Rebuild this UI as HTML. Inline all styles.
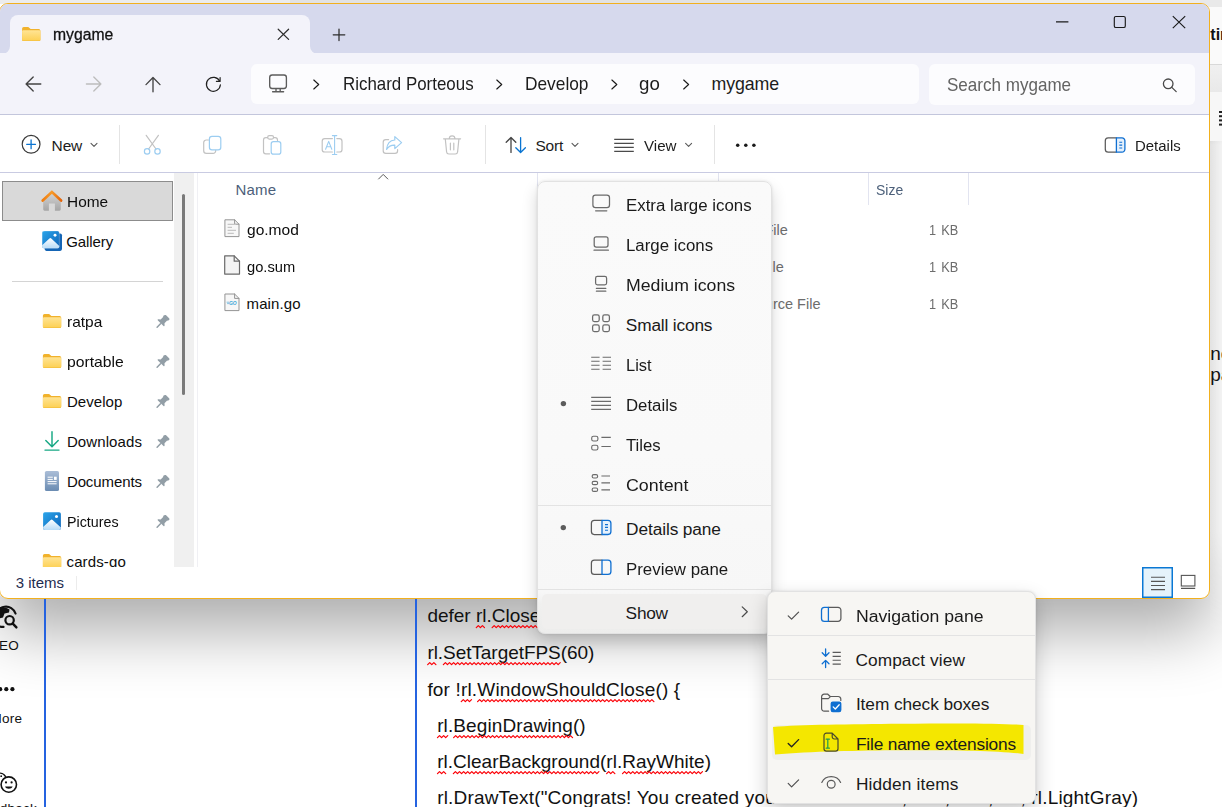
<!DOCTYPE html>
<html lang="en">
<head>
<meta charset="utf-8">
<title>mygame - File Explorer</title>
<style>
html,body{margin:0;padding:0;}
body{width:1222px;height:807px;overflow:hidden;position:relative;background:#fff;font-family:"Liberation Sans",sans-serif;}
.abs{position:absolute;}
.t{position:absolute;white-space:pre;line-height:1;transform-origin:0 0;font-family:"Liberation Sans",sans-serif;}
.layer{position:absolute;left:0;top:0;width:1222px;height:807px;}
svg{position:absolute;left:0;top:0;overflow:visible;}
/* ---------- background page ---------- */
#bg{background:#fff;}
.doc{position:absolute;white-space:pre;font-size:18.7px;line-height:1;color:#111;font-family:"Liberation Sans",sans-serif;}
.doc u{text-decoration:none;}
/* ---------- window ---------- */
#win{position:absolute;left:-1px;top:3px;width:1211px;height:596px;box-sizing:border-box;border:1px solid #f2b01e;border-radius:9px;overflow:hidden;background:#fff;}
#winin{position:absolute;left:0;top:-4px;width:1222px;height:807px;}
#titlebar{left:0;top:4px;width:1210px;height:50px;background:#d6d9ed;}
#addr{left:0;top:53px;width:1210px;height:61px;background:#f3f3fa;border-bottom:1px solid #c3c6dc;}
#tab{left:10px;top:14.5px;width:300px;height:40px;background:#f3f3fa;border-radius:8px 8px 0 0;}
.box{background:#fcfcfe;border-radius:6px;}
#cmd{left:0;top:115px;width:1210px;height:57px;background:#fff;border-bottom:1px solid #c9cbe2;}
.vsep{position:absolute;width:1px;background:#e4e4e4;}
#home{left:2px;top:181px;width:171px;height:40px;box-sizing:border-box;background:#d9d9d9;border:1px solid #8c8c8c;}
#strack{left:174px;top:173px;width:20px;height:394px;background:#f0f0f0;}
#sthumb{left:182px;top:194px;width:3px;height:201px;background:#7a7a7a;border-radius:2px;}
#sideclip{left:0;top:173px;width:174px;height:394px;overflow:hidden;}
#sideclip>div{position:absolute;left:0;top:-173px;width:1222px;height:807px;}
/* ---------- menus ---------- */
.menu{position:absolute;box-sizing:border-box;border:1px solid #e2e2e2;border-radius:8px;}
#menu{left:537px;top:181px;width:234.5px;height:452.5px;background:linear-gradient(to bottom,#fafafa 0,#f9f9f9 60%,#f7f7f7 91%,#f0f0ef 93.5%,#ededec 100%);box-shadow:0 8px 16px rgba(0,0,0,.16),0 0 3px rgba(0,0,0,.10);}
#sub{left:767px;top:591px;width:268.5px;height:212.5px;background:#f7f6f3;box-shadow:0 8px 20px rgba(0,0,0,.20),0 0 3px rgba(0,0,0,.10);}
.hsep{position:absolute;height:1px;background:#e3e3e3;}
</style>
</head>
<body>

<!-- ======================= BACKGROUND (browser / doc page) ======================= -->
<div id="bg" class="layer">
  <!-- right strip behind window -->
  <div class="abs" style="left:1200px;top:0;width:22px;height:7px;background:#e9e9e9"></div>
  <div class="abs" style="left:1200px;top:7px;width:22px;height:58px;background:#fafafa"></div>
  <div class="abs" style="left:1200px;top:64px;width:22px;height:1px;background:#d9d9d9"></div>
  <div class="abs" style="left:1200px;top:65px;width:22px;height:27px;background:linear-gradient(#f0f0f0,#e9e9e9)"></div>
  <div class="abs" style="left:1200px;top:92px;width:22px;height:49px;background:#f7f7f7"></div>
  <div class="abs" style="left:1200px;top:141px;width:22px;height:4px;background:linear-gradient(#f7f7f7,#fff)"></div>
  <div class="abs" style="left:0;top:0;width:1200px;height:4px;background:#ececec"></div>
  <div class="abs" style="left:290px;top:0;width:600px;height:4px;background:#e2e2e2"></div>
  <span class="t" style="left:1210.3px;top:26.5px;font-size:16px;font-weight:bold;color:#111">ting</span>
  <div class="abs" style="left:1219px;top:110.5px;width:6px;height:2.4px;background:#222;box-shadow:0 4.2px 0 #222,0 8.4px 0 #222,0 12.6px 0 #222"></div>
  <!-- shadow under window -->
  <div class="abs" style="left:0;top:141px;width:1222px;height:666px;overflow:hidden">
    <div class="abs" style="left:-1px;top:-138px;width:1211px;height:596px;border-radius:9px;box-shadow:0 32px 64px rgba(0,0,0,.33)"></div>
  </div>
  <div class="abs" style="left:1210px;top:141px;width:12px;height:500px;background:linear-gradient(to right,rgba(255,255,255,.30),rgba(255,255,255,.58));-webkit-mask-image:linear-gradient(to bottom,#000 0,#000 78%,transparent 100%);mask-image:linear-gradient(to bottom,#000 0,#000 78%,transparent 100%)"></div>
  <span class="t" style="left:1210.2px;top:344px;font-size:19px;color:#111">not</span>
  <span class="t" style="left:1210.2px;top:365px;font-size:19px;color:#111">pa</span>
  <!-- blue guide lines -->
  <div class="abs" style="left:44.2px;top:597px;width:2.2px;height:211px;background:#2563e0"></div>
  <div class="abs" style="left:415.4px;top:597px;width:2px;height:211px;background:#2563e0"></div>
  <!-- doc text -->
<div class="doc" style="left:427.40px;top:606.00px;font-size:19px;letter-spacing:0.000px">defer <u>rl</u>.<u>Close</u></div>
<div class="doc" style="left:427.40px;top:643.00px;font-size:19px;letter-spacing:-0.056px"><u>rl</u>.<u>SetTargetFPS</u>(60)</div>
<div class="doc" style="left:427.40px;top:680.00px;font-size:19px;letter-spacing:0.166px">for !<u>rl</u>.<u>WindowShouldClose</u>() {</div>
<div class="doc" style="left:437.20px;top:716.00px;font-size:19px;letter-spacing:0.107px"><u>rl</u>.<u>BeginDrawing</u>()</div>
<div class="doc" style="left:437.20px;top:752.00px;font-size:19px;letter-spacing:0.008px"><u>rl</u>.<u>ClearBackground</u>(<u>rl</u>.<u>RayWhite</u>)</div>
<div class="doc" style="left:437.20px;top:788.00px;font-size:19px;letter-spacing:0.178px"><u>rl</u>.<u>DrawText</u>(&quot;Congrats! You created your first window!&quot;, 190, 200, 20, <u>rl</u>.LightGray)</div>
<svg width="1222" height="807" viewBox="0 0 1222 807"><path d="M476.28 627.60 L478.33 625.60 L480.38 627.60 L482.43 625.60 L484.48 627.60 M492.13 627.60 L494.18 625.60 L496.23 627.60 L498.28 625.60 L500.33 627.60 L502.38 625.60 L504.43 627.60 L506.48 625.60 L508.53 627.60 L510.58 625.60 L512.63 627.60 L514.68 625.60 L516.73 627.60 L518.78 625.60 L520.83 627.60 L522.88 625.60 L524.93 627.60 L526.98 625.60 L529.03 627.60 L531.08 625.60 L533.13 627.60 L535.18 625.60 L537.23 627.60 L539.28 625.60 M427.69 664.60 L429.74 662.60 L431.79 664.60 L433.84 662.60 L435.89 664.60 M443.36 664.60 L445.41 662.60 L447.46 664.60 L449.51 662.60 L451.56 664.60 L453.61 662.60 L455.66 664.60 L457.71 662.60 L459.76 664.60 L461.81 662.60 L463.86 664.60 L465.91 662.60 L467.96 664.60 L470.01 662.60 L472.06 664.60 L474.11 662.60 L476.16 664.60 L478.21 662.60 L480.26 664.60 L482.31 662.60 L484.36 664.60 L486.41 662.60 L488.46 664.60 L490.51 662.60 L492.56 664.60 L494.61 662.60 L496.66 664.60 L498.71 662.60 L500.76 664.60 L502.81 662.60 L504.86 664.60 L506.91 662.60 L508.96 664.60 L511.01 662.60 L513.06 664.60 L515.11 662.60 L517.16 664.60 L519.21 662.60 L521.26 664.60 L523.31 662.60 L525.36 664.60 L527.41 662.60 L529.46 664.60 L531.51 662.60 L533.56 664.60 L535.61 662.60 L537.66 664.60 L539.71 662.60 L541.76 664.60 L543.81 662.60 L545.86 664.60 L547.91 662.60 L549.96 664.60 L552.01 662.60 L554.06 664.60 L556.11 662.60 L558.16 664.60 L560.21 662.60 M461.25 701.60 L463.30 699.60 L465.35 701.60 L467.40 699.60 L469.45 701.60 L471.50 699.60 M477.60 701.60 L479.65 699.60 L481.70 701.60 L483.75 699.60 L485.80 701.60 L487.85 699.60 L489.90 701.60 L491.95 699.60 L494.00 701.60 L496.05 699.60 L498.10 701.60 L500.15 699.60 L502.20 701.60 L504.25 699.60 L506.30 701.60 L508.35 699.60 L510.40 701.60 L512.45 699.60 L514.50 701.60 L516.55 699.60 L518.60 701.60 L520.65 699.60 L522.70 701.60 L524.75 699.60 L526.80 701.60 L528.85 699.60 L530.90 701.60 L532.95 699.60 L535.00 701.60 L537.05 699.60 L539.10 701.60 L541.15 699.60 L543.20 701.60 L545.25 699.60 L547.30 701.60 L549.35 699.60 L551.40 701.60 L553.45 699.60 L555.50 701.60 L557.55 699.60 L559.60 701.60 L561.65 699.60 L563.70 701.60 L565.75 699.60 L567.80 701.60 L569.85 699.60 L571.90 701.60 L573.95 699.60 L576.00 701.60 L578.05 699.60 L580.10 701.60 L582.15 699.60 L584.20 701.60 L586.25 699.60 L588.30 701.60 L590.35 699.60 L592.40 701.60 L594.45 699.60 L596.50 701.60 L598.55 699.60 L600.60 701.60 L602.65 699.60 L604.70 701.60 L606.75 699.60 L608.80 701.60 L610.85 699.60 L612.90 701.60 L614.95 699.60 L617.00 701.60 L619.05 699.60 L621.10 701.60 L623.15 699.60 L625.20 701.60 L627.25 699.60 L629.30 701.60 L631.35 699.60 L633.40 701.60 L635.45 699.60 L637.50 701.60 L639.55 699.60 L641.60 701.60 L643.65 699.60 L645.70 701.60 L647.75 699.60 L649.80 701.60 L651.85 699.60 L653.90 701.60 M437.49 737.60 L439.54 735.60 L441.59 737.60 L443.64 735.60 L445.69 737.60 L447.74 735.60 M453.64 737.60 L455.69 735.60 L457.74 737.60 L459.79 735.60 L461.84 737.60 L463.89 735.60 L465.94 737.60 L467.99 735.60 L470.04 737.60 L472.09 735.60 L474.14 737.60 L476.19 735.60 L478.24 737.60 L480.29 735.60 L482.34 737.60 L484.39 735.60 L486.44 737.60 L488.49 735.60 L490.54 737.60 L492.59 735.60 L494.64 737.60 L496.69 735.60 L498.74 737.60 L500.79 735.60 L502.84 737.60 L504.89 735.60 L506.94 737.60 L508.99 735.60 L511.04 737.60 L513.09 735.60 L515.14 737.60 L517.19 735.60 L519.24 737.60 L521.29 735.60 L523.34 737.60 L525.39 735.60 L527.44 737.60 L529.49 735.60 L531.54 737.60 L533.59 735.60 L535.64 737.60 L537.69 735.60 L539.74 737.60 L541.79 735.60 L543.84 737.60 L545.89 735.60 L547.94 737.60 L549.99 735.60 L552.04 737.60 L554.09 735.60 L556.14 737.60 L558.19 735.60 L560.24 737.60 L562.29 735.60 L564.34 737.60 L566.39 735.60 L568.44 737.60 L570.49 735.60 L572.54 737.60 M437.49 773.60 L439.54 771.60 L441.59 773.60 L443.64 771.60 L445.69 773.60 M453.36 773.60 L455.41 771.60 L457.46 773.60 L459.51 771.60 L461.56 773.60 L463.61 771.60 L465.66 773.60 L467.71 771.60 L469.76 773.60 L471.81 771.60 L473.86 773.60 L475.91 771.60 L477.96 773.60 L480.01 771.60 L482.06 773.60 L484.11 771.60 L486.16 773.60 L488.21 771.60 L490.26 773.60 L492.31 771.60 L494.36 773.60 L496.41 771.60 L498.46 773.60 L500.51 771.60 L502.56 773.60 L504.61 771.60 L506.66 773.60 L508.71 771.60 L510.76 773.60 L512.81 771.60 L514.86 773.60 L516.91 771.60 L518.96 773.60 L521.01 771.60 L523.06 773.60 L525.11 771.60 L527.16 773.60 L529.21 771.60 L531.26 773.60 L533.31 771.60 L535.36 773.60 L537.41 771.60 L539.46 773.60 L541.51 771.60 L543.56 773.60 L545.61 771.60 L547.66 773.60 L549.71 771.60 L551.76 773.60 L553.81 771.60 L555.86 773.60 L557.91 771.60 L559.96 773.60 L562.01 771.60 L564.06 773.60 L566.11 771.60 L568.16 773.60 L570.21 771.60 L572.26 773.60 L574.31 771.60 L576.36 773.60 L578.41 771.60 L580.46 773.60 L582.51 771.60 L584.56 773.60 L586.61 771.60 L588.66 773.60 L590.71 771.60 L592.76 773.60 L594.81 771.60 L596.86 773.60 L598.91 771.60 M606.64 773.60 L608.69 771.60 L610.74 773.60 L612.79 771.60 L614.84 773.60 M622.52 773.60 L624.57 771.60 L626.62 773.60 L628.67 771.60 L630.72 773.60 L632.77 771.60 L634.82 773.60 L636.87 771.60 L638.92 773.60 L640.97 771.60 L643.02 773.60 L645.07 771.60 L647.12 773.60 L649.17 771.60 L651.22 773.60 L653.27 771.60 L655.32 773.60 L657.37 771.60 L659.42 773.60 L661.47 771.60 L663.52 773.60 L665.57 771.60 L667.62 773.60 L669.67 771.60 L671.72 773.60 L673.77 771.60 L675.82 773.60 L677.87 771.60 L679.92 773.60 L681.97 771.60 L684.02 773.60 L686.07 771.60 L688.12 773.60 L690.17 771.60 L692.22 773.60 L694.27 771.60 L696.32 773.60 L698.37 771.60 L700.42 773.60 L702.47 771.60 M437.49 809.60 L439.54 807.60 L441.59 809.60 L443.64 807.60 L445.69 809.60 L447.74 807.60 M453.86 809.60 L455.91 807.60 L457.96 809.60 L460.01 807.60 L462.06 809.60 L464.11 807.60 L466.16 809.60 L468.21 807.60 L470.26 809.60 L472.31 807.60 L474.36 809.60 L476.41 807.60 L478.46 809.60 L480.51 807.60 L482.56 809.60 L484.61 807.60 L486.66 809.60 L488.71 807.60 L490.76 809.60 L492.81 807.60 L494.86 809.60 L496.91 807.60 L498.96 809.60 L501.01 807.60 L503.06 809.60 L505.11 807.60 L507.16 809.60 L509.21 807.60 L511.26 809.60 L513.31 807.60 L515.36 809.60 L517.41 807.60 L519.46 809.60 L521.51 807.60 L523.56 809.60 L525.61 807.60 L527.66 809.60 L529.71 807.60 L531.76 809.60 L533.81 807.60 M1031.63 809.60 L1033.68 807.60 L1035.73 809.60 L1037.78 807.60 L1039.83 809.60 L1041.88 807.60" fill="none" stroke="#fb0007" stroke-width="1.25" stroke-linejoin="round" stroke-linecap="round"/></svg>
  <svg width="1222" height="807" viewBox="0 0 1222 807" fill="none" stroke-linecap="round" stroke-linejoin="round">
    <!-- globe + magnifier (SEO) -->
    <path d="M-4 616.5 A10 10 0 0 1 15.5 613.5" stroke="#111" stroke-width="2.2"/>
    <path d="M-3 608 C1 606.5 6 607 9.5 609.5 L9 612.5 L4.5 613.5 L3 617.5 L-1 618.5 L-3.5 622 Z" fill="#111" stroke="none"/>
    <path d="M-3 625.5 C-1 626.5 1.5 627 3.5 626.8" stroke="#111" stroke-width="2.2"/>
    <circle cx="9.6" cy="620.2" r="4.2" stroke="#111" stroke-width="2.2"/>
    <path d="M12.8 623.6 L16.4 627.4" stroke="#111" stroke-width="2.4"/>
    <!-- more dots -->
    <g fill="#111" stroke="none"><circle cx="0.2" cy="689.2" r="2.1"/><circle cx="6.3" cy="689.2" r="2.1"/><circle cx="12.4" cy="689.2" r="2.1"/></g>
    <!-- smiley -->
    <circle cx="8.8" cy="784.6" r="7.7" stroke="#111" stroke-width="1.6"/>
    <circle cx="6" cy="782.4" r="1.1" fill="#111" stroke="none"/><circle cx="11.6" cy="782.4" r="1.1" fill="#111" stroke="none"/>
    <path d="M5 786.6 C6 789.6 11.6 789.6 12.6 786.6 Z" fill="#111" stroke="none"/>
    <path d="M-2 773.6 A6 6 0 0 1 5.4 776.4" stroke="#111" stroke-width="1.4"/>
    <circle cx="1.2" cy="776.2" r=".9" fill="#111" stroke="none"/>
  </svg>
  <span class="t" style="left:-10.2px;top:639px;font-size:13.5px;color:#111;letter-spacing:.2px">SEO</span>
  <span class="t" style="left:-9.4px;top:712px;font-size:13.5px;color:#111;letter-spacing:.2px">More</span>
  <span class="t" style="left:-24px;top:802px;font-size:13.5px;color:#111;letter-spacing:.2px">Feedback</span>

</div>

<!-- ======================= EXPLORER WINDOW ======================= -->
<div id="win"><div id="winin">
  <div id="titlebar" class="abs"></div>
  <div id="addr" class="abs"></div>
  <div id="tab" class="abs"></div>
  <!-- tab concave corners -->
  <svg width="1222" height="807">
    <path d="M2 54 A8 8 0 0 0 10 46 V54 Z" fill="#f3f3fa"/>
    <path d="M318 54 A8 8 0 0 1 310 46 V54 Z" fill="#f3f3fa"/>
  </svg>
  <div class="abs box" style="left:251px;top:64px;width:668px;height:40px"></div>
  <div class="abs box" style="left:929px;top:64px;width:266px;height:41px"></div>
  <div id="cmd" class="abs"></div>
  <div class="vsep" style="left:119px;top:125px;height:39px"></div>
  <div class="vsep" style="left:485px;top:125px;height:39px"></div>
  <div class="vsep" style="left:714px;top:125px;height:39px"></div>
  <!-- sidebar -->
  <div id="home" class="abs"></div>
  <div id="strack" class="abs"></div>
  <div id="sthumb" class="abs"></div>
  <div class="abs" style="left:12px;top:281px;width:151px;height:1px;background:#d4d4d4"></div>
  <div class="abs" style="left:196.5px;top:173px;width:1px;height:394px;background:#f0f0f4"></div>
  <!-- list header separators -->
  <div class="abs" style="left:868px;top:173px;width:1px;height:32px;background:#e2e4f0"></div>
  <div class="abs" style="left:968px;top:173px;width:1px;height:32px;background:#e2e4f0"></div>
  <div class="abs" style="left:537px;top:173px;width:1px;height:32px;background:#e2e4f0"></div>
  <div class="abs" style="left:718px;top:173px;width:1px;height:32px;background:#e2e4f0"></div>
  <!-- status bar -->
  <div class="abs" style="left:76px;top:575.5px;width:1px;height:14px;background:#ececec"></div>
  <div class="abs" style="left:1142px;top:567px;width:31px;height:31px;box-sizing:border-box;border:1px solid #0a78d4;box-shadow:inset 0 0 0 .5px #0a78d4;background:#e5f3fb"></div>
<svg width="1222" height="807" viewBox="0 0 1222 807" fill="none" stroke-linecap="round" stroke-linejoin="round">
  <defs>
    <linearGradient id="gFold" x1="0" y1="0" x2="0" y2="1"><stop offset="0" stop-color="#ffe494"/><stop offset=".9" stop-color="#fdd25a"/><stop offset="1" stop-color="#f2bb36"/></linearGradient>
    <linearGradient id="gBlue" x1="0" y1="0" x2="1" y2="1"><stop offset="0" stop-color="#2ba5ea"/><stop offset="1" stop-color="#0e63b8"/></linearGradient>
    <linearGradient id="gMount" x1="0" y1="0" x2="0" y2="1"><stop offset="0" stop-color="#ffffff"/><stop offset="1" stop-color="#b9dcf7"/></linearGradient>
    <linearGradient id="gDoc" x1="0" y1="0" x2="0" y2="1"><stop offset="0" stop-color="#aabdd7"/><stop offset="1" stop-color="#6a8bb2"/></linearGradient>
    <linearGradient id="gHome" x1="0" y1="0" x2="0" y2="1"><stop offset="0" stop-color="#d6d6d6"/><stop offset="1" stop-color="#a6a6a6"/></linearGradient>
    <linearGradient id="gRoof" x1="0" y1="0" x2="1" y2="0"><stop offset="0" stop-color="#ef7d10"/><stop offset=".5" stop-color="#f79a2a"/><stop offset="1" stop-color="#e4650a"/></linearGradient>
    <g id="folder">
      <path d="M0 1.6 a1.6 1.6 0 0 1 1.6 -1.6 h4.6 l2.3 2.1 h8.2 a1.6 1.6 0 0 1 1.6 1.6 v9 a1.3 1.3 0 0 1 -1.3 1.3 h-15.7 a1.3 1.3 0 0 1 -1.3 -1.3 z" fill="#f1b22c" stroke="none"/>
      <rect x="0" y="3.3" width="18.3" height="10.7" rx="1.3" fill="url(#gFold)" stroke="none"/>
    </g>
    <g id="pin" fill="#929ea6" stroke="none">
      <path d="M8.2 0.5 c.5 -.5 1.2 -.5 1.7 0 l3 3 c.5 .5 .5 1.2 0 1.7 l-.9 .6 l-1.3 .2 l-2.4 2.4 l.1 2.3 c0 .7 -.6 1 -1.1 .5 l-5.6 -5.6 c-.5 -.5 -.2 -1.1 .5 -1.1 l2.3 .1 l2.4 -2.4 l.2 -1.3 z"/>
      <path d="M4.3 9 L0.9 12.4" stroke="#929ea6" stroke-width="1.5" stroke-linecap="round" fill="none"/>
    </g>
    <g id="pic">
      <rect x="0" y="0" width="17.8" height="17.8" rx="1.8" fill="url(#gBlue)" stroke="none"/>
      <path d="M0 16 v-1.2 l7.6 -7 a1.4 1.4 0 0 1 1.9 0 l8.3 7.6 v.6 a1.8 1.8 0 0 1 -1.8 1.8 h-14.2 a1.8 1.8 0 0 1 -1.8 -1.8z" fill="url(#gMount)" stroke="none"/>
      <circle cx="13.4" cy="4.4" r="1.5" fill="#fff" stroke="none"/>
    </g>
    <path id="chev" d="M0 0 l4.9 4.5 l-4.9 4.5" stroke="#1a1a1a" stroke-width="1.15"/>
    <path id="chevd" d="M0 0 l3 3 l3 -3" stroke="#5a5a5a" stroke-width="1.1"/>
  </defs>

  <!-- window controls -->
  <g stroke="#1a1a1a" stroke-width="1.15" stroke-linecap="butt">
    <path d="M1056 21.8 H1068.4"/>
    <rect x="1114.3" y="16.5" width="11" height="11" rx="1.6"/>
    <path d="M1172.8 16.1 L1185.2 28.1 M1185.2 16.1 L1172.8 28.1"/>
  </g>
  <!-- tab -->
  <use href="#folder" x="22.1" y="27"/>
  <g stroke="#2e2e2e" stroke-width="1.25">
    <path d="M278.2 29.2 L288.6 39.4 M288.6 29.2 L278.2 39.4"/>
    <path d="M333.2 34.8 H344.8 M339 29 V40.6"/>
  </g>
  <!-- nav arrows -->
  <g stroke="#444" stroke-width="1.35">
    <path d="M26.2 84 H40.8 M33.2 76.9 L26.1 84 L33.2 91.1"/>
    <path d="M153 77.6 V91.7 M146 84.6 L153 77.5 L160 84.6"/>
    <path d="M219.7 81.2 A7 7 0 1 0 220.4 84.8" stroke-width="1.2" stroke="#222"/>
    <path d="M220.1 77.5 V81.3 H216.4" stroke-width="1.2" stroke="#222"/>
  </g>
  <g stroke="#bdbdbd" stroke-width="1.35">
    <path d="M86.4 84 H100.9 M93.8 76.9 L100.9 84 L93.8 91.1"/>
  </g>
  <!-- monitor -->
  <g stroke="#5c5c5c" stroke-width="1.35">
    <rect x="269.7" y="75" width="16.7" height="13.5" rx="2.4"/>
    <path d="M276 88.8 V91.4 M280.2 88.8 V91.4 M272.6 91.7 H283.6"/>
  </g>
  <use href="#chev" x="313.8" y="80"/>
  <use href="#chev" x="496.8" y="80"/>
  <use href="#chev" x="611.9" y="80"/>
  <use href="#chev" x="683.7" y="80"/>
  <!-- search -->
  <g stroke="#4a4a4a" stroke-width="1.3">
    <circle cx="1168.2" cy="83.8" r="4.8"/>
    <path d="M1171.8 87.4 L1176.2 91.6"/>
  </g>
  <!-- command bar -->
  <circle cx="31.1" cy="144.3" r="8.9" stroke="#3a3a3a" stroke-width="1.2"/>
  <path d="M26.7 144.3 H35.5 M31.1 139.9 V148.7" stroke="#0a74d1" stroke-width="1.3"/>
  <use href="#chevd" x="91" y="143.4"/>
  <use href="#chevd" x="572" y="143.4"/>
  <use href="#chevd" x="685.6" y="143.4"/>
  <!-- scissors -->
  <g stroke="#c2c2c2" stroke-width="1.2">
    <path d="M146.2 135.3 L156 149 M158.4 135.3 L148.6 149"/>
  </g>
  <g stroke="#9ccdf1" stroke-width="1.2">
    <circle cx="147.1" cy="151.4" r="2.7"/><circle cx="157.5" cy="151.4" r="2.7"/>
  </g>
  <!-- copy -->
  <path d="M208.4 140 H206.3 a2.6 2.6 0 0 0 -2.6 2.6 v8.2 a2.6 2.6 0 0 0 2.6 2.6 h6.8 a2.6 2.6 0 0 0 2.6 -2.6 V150.4" stroke="#c2c2c2" stroke-width="1.2"/>
  <rect x="209.4" y="136.3" width="11.4" height="13.6" rx="2.6" stroke="#9ccdf1" stroke-width="1.2"/>
  <!-- paste -->
  <path d="M267.6 137.6 H265.8 a2.3 2.3 0 0 0 -2.3 2.3 v11.6 a2.3 2.3 0 0 0 2.3 2.3 h3.8 M273.6 137.6 h1.6 a2.3 2.3 0 0 1 2.3 2.3 v.8" stroke="#c2c2c2" stroke-width="1.2"/>
  <rect x="267.7" y="135.7" width="5.8" height="3.4" rx="1.5" stroke="#c2c2c2" stroke-width="1.2"/>
  <rect x="271.2" y="141.7" width="9.6" height="12.4" rx="2.2" stroke="#9ccdf1" stroke-width="1.2"/>
  <!-- rename -->
  <path d="M332.4 138.6 H324.8 a2.6 2.6 0 0 0 -2.6 2.6 v8.2 a2.6 2.6 0 0 0 2.6 2.6 h7.6 M336.8 138.6 h2.6 a2.6 2.6 0 0 1 2.6 2.6 v8.2 a2.6 2.6 0 0 1 -2.6 2.6 h-2.6" stroke="#c2c2c2" stroke-width="1.2"/>
  <path d="M334.6 136 V154.2 M332.4 135.6 H336.8 M332.4 154.5 H336.8 M325.6 149.3 L328.7 141.4 L331.8 149.3 M326.6 146.8 H330.8" stroke="#9ccdf1" stroke-width="1.1"/>
  <!-- share -->
  <path d="M388.6 139.6 H385.8 a2.6 2.6 0 0 0 -2.6 2.6 v8.6 a2.6 2.6 0 0 0 2.6 2.6 h9.2 a2.6 2.6 0 0 0 2.6 -2.6 V149.6" stroke="#c2c2c2" stroke-width="1.2"/>
  <path d="M394.8 136.6 L401.6 142.6 L394.8 148.6 V145.2 C391 145 388.6 146.4 386.6 149.4 C387 144.4 389.8 140.4 394.8 140 Z" stroke="#9ccdf1" stroke-width="1.2"/>
  <!-- delete -->
  <path d="M443.6 138.8 H460.6 M449.3 138.6 a2.8 2.8 0 0 1 5.6 0 M445.3 139 l1.3 13 a2.3 2.3 0 0 0 2.3 2 h6.4 a2.3 2.3 0 0 0 2.3 -2 l1.3 -13 M450.4 143.2 V149.8 M453.8 143.2 V149.8" stroke="#c2c2c2" stroke-width="1.2"/>
  <!-- sort -->
  <path d="M511 137.6 V152.4 M506.2 142.3 L511 137.5 L515.8 142.3" stroke="#444" stroke-width="1.3"/>
  <path d="M520.6 137.6 V152.4 M515.8 147.7 L520.6 152.5 L525.4 147.7" stroke="#0a74d1" stroke-width="1.3"/>
  <!-- view -->
  <path d="M614.2 139.3 H633.8 M614.2 143.3 H633.8 M614.2 147.3 H633.8 M614.2 151.3 H633.8" stroke="#4a4a4a" stroke-width="1.2" stroke-linecap="butt"/>
  <!-- more -->
  <g fill="#1a1a1a" stroke="none"><circle cx="737.7" cy="145.2" r="1.75"/><circle cx="745.8" cy="145.2" r="1.75"/><circle cx="753.9" cy="145.2" r="1.75"/></g>
  <!-- details pane icon -->
  <path d="M1116.4 137.9 H1108.2 a2.9 2.9 0 0 0 -2.9 2.9 v8.5 a2.9 2.9 0 0 0 2.9 2.9 h8.2" stroke="#5a5a5a" stroke-width="1.25"/>
  <path d="M1116.4 137.9 h5.6 a2.9 2.9 0 0 1 2.9 2.9 v8.5 a2.9 2.9 0 0 1 -2.9 2.9 h-5.6 z" stroke="#0f6fd1" stroke-width="1.3" fill="#e6f1fc"/>
  <path d="M1119.3 142.2 H1122.2 M1119.3 145.1 H1122.2 M1119.3 148 H1122.2" stroke="#0f6fd1" stroke-width="1.1" stroke-linecap="butt"/>

  <!-- home -->
  <path d="M43.2 199.6 L51.9 192.2 L60.8 199.6 V209.3 a1.4 1.4 0 0 1 -1.4 1.4 H54.9 V203.4 H48.9 V210.7 H44.6 a1.4 1.4 0 0 1 -1.4 -1.4 Z" fill="url(#gHome)" stroke="none"/>
  <path d="M42.7 200.6 L51.9 192 L61.1 200.6" stroke="url(#gRoof)" stroke-width="2.7" stroke-linejoin="miter" stroke-linecap="round"/>
  <!-- gallery -->
  <rect x="44.6" y="233.5" width="17.4" height="17.4" rx="1.8" fill="#1565b5" stroke="none"/>
  <g transform="translate(42.1 231) scale(.966)"><use href="#pic"/></g>
  <rect x="42.1" y="231" width="17.2" height="17.2" rx="1.8" stroke="#fff" stroke-width=".5" stroke-opacity=".5"/>
  <!-- folders -->
  <use href="#folder" x="42.9" y="313.9"/>
  <use href="#folder" x="42.9" y="353.9"/>
  <use href="#folder" x="42.9" y="393.9"/>
  <!-- downloads -->
  <path d="M52 431.8 V446.6 M45.8 440.6 L52 446.8 L58.2 440.6 M45 450.1 H59" stroke="#17a884" stroke-width="1.45"/>
  <!-- documents -->
  <rect x="44.9" y="471" width="14.1" height="20" rx="1.6" fill="url(#gDoc)" stroke="none"/>
  <path d="M47.6 477.2 H52.8 M47.6 479.4 H52.8 M47.6 481.6 H56.6 M47.6 483.8 H56.6" stroke="#fff" stroke-width="1" stroke-linecap="butt"/>
  <rect x="54" y="476.7" width="2.7" height="3.2" fill="#fff" stroke="none"/>
  <!-- pictures -->
  <use href="#pic" x="43.1" y="512.2"/>
  <!-- pins -->
  <use href="#pin" x="156.2" y="314.8"/>
  <use href="#pin" x="156.2" y="354.8"/>
  <use href="#pin" x="156.2" y="394.8"/>
  <use href="#pin" x="156.2" y="434.8"/>
  <use href="#pin" x="156.2" y="474.8"/>
  <use href="#pin" x="156.2" y="514.8"/>

  <!-- list: sort caret -->
  <path d="M378.6 179 L383.2 174.4 L387.8 179" stroke="#5a5a5a" stroke-width="1"/>
  <!-- file icons -->
  <g stroke="#949494" stroke-width="1" fill="#f7f7f7">
    <path d="M225.3 219.8 H234.6 L239 224.2 V236.6 H225.3 Z"/>
    <path d="M234.6 219.8 V224.2 H239" fill="none"/>
    <path d="M225.3 294 H234.6 L239 298.4 V310.6 H225.3 Z"/>
    <path d="M234.6 294 V298.4 H239" fill="none"/>
  </g>
  <path d="M227.6 224.4 H236 M227.6 227.4 H232 M227.6 230.4 H236 M227.6 233.4 H233.8" stroke="#c6c6c6" stroke-width="1.1" stroke-linecap="butt"/>
  <g stroke="#6a6a6a" stroke-width="1.2" fill="#f4f4f4">
    <path d="M224.7 255.9 H234.2 L239.5 261.2 V274.1 H224.7 Z"/>
    <path d="M234.2 255.9 V261.2 H239.5" fill="none"/>
  </g>
  <text x="228.9" y="305.2" font-family="Liberation Sans, sans-serif" font-size="5.6" font-weight="bold" font-style="italic" fill="#35a3d6" stroke="none" textLength="7.6" lengthAdjust="spacingAndGlyphs">GO</text><path d="M227 302.2 H228.6 M227.5 303.6 H228.6" stroke="#35a3d6" stroke-width=".6"/>

  <!-- status bar view buttons -->
  <path d="M1151 577.3 H1165 M1151 581.4 H1165 M1151 585.5 H1165 M1151 589.6 H1165" stroke="#555" stroke-width="1.1" stroke-linecap="butt"/>
  <rect x="1181.3" y="575.4" width="13.6" height="10.6" stroke="#555" stroke-width="1.1" stroke-linejoin="miter"/>
  <path d="M1181 588.4 H1195.2" stroke="#555" stroke-width="1.1" stroke-linecap="butt"/>
</svg>

<span class="t" style="left:53.40px;top:27px;font-size:16.8px;color:#111;transform:scaleX(0.9369);-webkit-text-stroke:.3px #111;">mygame</span>
<span class="t" style="left:343.20px;top:76px;font-size:17.8px;color:#1c1c1c;transform:scaleX(0.9506);">Richard Porteous</span>
<span class="t" style="left:525.20px;top:76px;font-size:17.8px;color:#1c1c1c;transform:scaleX(0.9732);">Develop</span>
<span class="t" style="left:639.40px;top:76px;font-size:17.8px;color:#1c1c1c;transform:scaleX(1.0515);">go</span>
<span class="t" style="left:711.60px;top:76px;font-size:17.8px;color:#1c1c1c;letter-spacing:-0.138px;">mygame</span>
<span class="t" style="left:947.00px;top:77px;font-size:17.8px;color:#636363;transform:scaleX(0.9585);">Search mygame</span>
<span class="t" style="left:51.60px;top:138px;font-size:15.5px;color:#1c1c1c;letter-spacing:-0.158px;">New</span>
<span class="t" style="left:535.40px;top:138px;font-size:15.5px;color:#1c1c1c;letter-spacing:-0.179px;">Sort</span>
<span class="t" style="left:643.70px;top:138px;font-size:15.5px;color:#1c1c1c;transform:scaleX(0.9752);">View</span>
<span class="t" style="left:1135.00px;top:138px;font-size:15.5px;color:#1c1c1c;transform:scaleX(0.9643);">Details</span>
<span class="t" style="left:66.70px;top:194px;font-size:15px;color:#0d0d0d;transform:scaleX(1.0271);">Home</span>
<span class="t" style="left:66.20px;top:234px;font-size:15px;color:#0d0d0d;letter-spacing:-0.086px;">Gallery</span>
<span class="t" style="left:66.50px;top:314px;font-size:15px;color:#0d0d0d;transform:scaleX(1.0321);">ratpa</span>
<span class="t" style="left:66.90px;top:354px;font-size:15px;color:#0d0d0d;transform:scaleX(1.0476);">portable</span>
<span class="t" style="left:66.90px;top:394px;font-size:15px;color:#0d0d0d;letter-spacing:0.076px;">Develop</span>
<span class="t" style="left:66.90px;top:434px;font-size:15px;color:#0d0d0d;letter-spacing:0.110px;">Downloads</span>
<span class="t" style="left:66.90px;top:474px;font-size:15px;color:#0d0d0d;letter-spacing:-0.097px;">Documents</span>
<span class="t" style="left:66.50px;top:514px;font-size:15px;color:#0d0d0d;transform:scaleX(0.9522);">Pictures</span>
<span class="t" style="left:15.80px;top:575px;font-size:15px;color:#1f2d4f;letter-spacing:-0.010px;">3 items</span>
<span class="t" style="left:235.60px;top:182px;font-size:15px;color:#4c607a;letter-spacing:0.161px;">Name</span>
<span class="t" style="left:875.50px;top:182px;font-size:15px;color:#4c607a;transform:scaleX(0.9319);">Size</span>
<span class="t" style="left:246.50px;top:222px;font-size:15px;color:#0d0d0d;transform:scaleX(1.0370);">go.mod</span>
<span class="t" style="left:246.50px;top:259px;font-size:15px;color:#0d0d0d;transform:scaleX(0.9796);">go.sum</span>
<span class="t" style="left:246.50px;top:296px;font-size:15px;color:#0d0d0d;letter-spacing:0.137px;">main.go</span>
<span class="t" style="left:929.30px;top:222px;font-size:15px;color:#6d6d6d;transform:scaleX(0.8485);word-spacing:2px;">1 KB</span>
<span class="t" style="left:929.30px;top:259px;font-size:15px;color:#6d6d6d;transform:scaleX(0.8485);word-spacing:2px;">1 KB</span>
<span class="t" style="left:929.30px;top:296px;font-size:15px;color:#6d6d6d;transform:scaleX(0.8485);word-spacing:2px;">1 KB</span>
<span class="t" style="left:726.57px;top:223px;font-size:14.5px;color:#6d6d6d;">MOD File</span>
<span class="t" style="left:724.17px;top:260px;font-size:14.5px;color:#6d6d6d;">SUM File</span>
<span class="t" style="left:723.78px;top:297px;font-size:14.5px;color:#6d6d6d;">Go Source File</span>
  <div id="sideclip" class="abs"><div>
<span class="t" style="left:66.50px;top:554px;font-size:15px;color:#0d0d0d;letter-spacing:0.134px;">cards-go</span>
<svg width="1222" height="807" viewBox="0 0 1222 807"><use href="#folder" x="42.9" y="553.9"/></svg>

  </div></div>
</div></div>

<!-- ======================= VIEW MENU ======================= -->
<div id="menu" class="menu"></div>
<div class="layer" id="menul">
  <div class="hsep" style="left:538px;top:504.5px;width:232.5px"></div>
  <div class="hsep" style="left:538px;top:588.5px;width:232.5px"></div>
  <div class="abs" style="left:542px;top:594px;width:224.5px;height:35px;border-radius:5px;background:#f0efee"></div>
<svg width="1222" height="807" viewBox="0 0 1222 807" fill="none" stroke-linecap="round" stroke-linejoin="round">
  <g stroke="#6b6b6b" stroke-width="1.25">
    <!-- extra large -->
    <rect x="592.9" y="195.1" width="16.6" height="12.6" rx="2.6"/>
    <path d="M595.6 210.8 H606.8"/>
    <!-- large -->
    <rect x="594.2" y="236.8" width="13.8" height="10.2" rx="2"/>
    <path d="M594 250.2 H608.4"/>
    <!-- medium -->
    <rect x="595.6" y="276.4" width="11" height="8.4" rx="1.8"/>
    <path d="M596.4 288.4 H605.8 M596.4 291.2 H605.8"/>
    <!-- small -->
    <rect x="592.6" y="314.9" width="6.6" height="6.6" rx="1.8"/>
    <rect x="602.8" y="314.9" width="6.6" height="6.6" rx="1.8"/>
    <rect x="592.6" y="324.9" width="6.6" height="6.6" rx="1.8"/>
    <rect x="602.8" y="324.9" width="6.6" height="6.6" rx="1.8"/>
  </g>
  <g stroke="#6b6b6b" stroke-width="1.15" stroke-linecap="butt">
    <!-- list -->
    <path d="M591.2 357.2 H599.6 M602.6 357.2 H611 M591.2 361.2 H599.6 M602.6 361.2 H611 M591.2 365.2 H599.6 M602.6 365.2 H611 M591.2 369.2 H599.6 M602.6 369.2 H611"/>
    <!-- details -->
    <path d="M591.2 397.3 H611 M591.2 401.3 H611 M591.2 405.3 H611 M591.2 409.3 H611"/>
    <!-- tiles lines -->
    <path d="M601.4 437.3 H610.8 M601.4 446.5 H610.8"/>
    <!-- content lines -->
    <path d="M601.4 476 H610 M601.4 482.9 H610 M601.4 489.8 H610"/>
  </g>
  <g stroke="#6b6b6b" stroke-width="1.15">
    <rect x="591.7" y="436.2" width="6.2" height="4.8" rx="1.8"/>
    <rect x="591.7" y="445.2" width="6.2" height="4.8" rx="1.8"/>
    <rect x="592.2" y="474.6" width="5.4" height="3.4" rx="1.5"/>
    <rect x="592.2" y="481.3" width="5.4" height="3.4" rx="1.5"/>
    <rect x="592.2" y="488" width="5.4" height="3.4" rx="1.5"/>
  </g>
  <!-- bullets -->
  <circle cx="563.4" cy="403.6" r="2.7" fill="#5c5c5c"/>
  <circle cx="563.3" cy="527.6" r="2.7" fill="#5c5c5c"/>
  <!-- details pane -->
  <path d="M602 520.3 H594.3 a2.9 2.9 0 0 0 -2.9 2.9 v8.4 a2.9 2.9 0 0 0 2.9 2.9 h7.7" stroke="#5a5a5a" stroke-width="1.25"/>
  <path d="M602 520.3 h6 a2.9 2.9 0 0 1 2.9 2.9 v8.4 a2.9 2.9 0 0 1 -2.9 2.9 h-6 z" stroke="#0f6fd1" stroke-width="1.3" fill="#e6f1fc"/>
  <path d="M605 524.6 H608 M605 527.4 H608 M605 530.2 H608" stroke="#0f6fd1" stroke-width="1.1" stroke-linecap="butt"/>
  <!-- preview pane -->
  <path d="M602 560.2 H594.3 a2.9 2.9 0 0 0 -2.9 2.9 v8.4 a2.9 2.9 0 0 0 2.9 2.9 h7.7" stroke="#5a5a5a" stroke-width="1.25"/>
  <path d="M602 560.2 h6 a2.9 2.9 0 0 1 2.9 2.9 v8.4 a2.9 2.9 0 0 1 -2.9 2.9 h-6 z" stroke="#0f6fd1" stroke-width="1.3"/>
  <!-- show chevron -->
  <path d="M742.2 606.9 L747.3 611.8 L742.2 616.7" stroke="#4a4a4a" stroke-width="1.2"/>
</svg>

<span class="t" style="left:626.20px;top:197px;font-size:17.3px;color:#1a1a1a;transform:scaleX(0.9758);">Extra large icons</span>
<span class="t" style="left:626.20px;top:237px;font-size:17.3px;color:#1a1a1a;transform:scaleX(0.9749);">Large icons</span>
<span class="t" style="left:626.20px;top:277px;font-size:17.3px;color:#1a1a1a;transform:scaleX(1.0234);">Medium icons</span>
<span class="t" style="left:625.80px;top:317px;font-size:17.3px;color:#1a1a1a;letter-spacing:-0.166px;">Small icons</span>
<span class="t" style="left:626.40px;top:357px;font-size:17.3px;color:#1a1a1a;transform:scaleX(0.9515);">List</span>
<span class="t" style="left:626.40px;top:397px;font-size:17.3px;color:#1a1a1a;transform:scaleX(0.9711);">Details</span>
<span class="t" style="left:625.50px;top:437px;font-size:17.3px;color:#1a1a1a;transform:scaleX(0.9677);">Tiles</span>
<span class="t" style="left:625.60px;top:477px;font-size:17.3px;color:#1a1a1a;transform:scaleX(1.0309);">Content</span>
<span class="t" style="left:626.10px;top:521px;font-size:17.3px;color:#1a1a1a;letter-spacing:-0.107px;">Details pane</span>
<span class="t" style="left:626.10px;top:561px;font-size:17.3px;color:#1a1a1a;transform:scaleX(0.9759);">Preview pane</span>
<span class="t" style="left:625.60px;top:605px;font-size:17.3px;color:#1a1a1a;letter-spacing:-0.245px;">Show</span>
</div>

<!-- ======================= SHOW SUBMENU ======================= -->
<div id="sub" class="menu"></div>
<div class="layer" id="subl">
  <div class="hsep" style="left:768px;top:635px;width:266.5px"></div>
  <div class="hsep" style="left:768px;top:679px;width:266.5px"></div>
  <div class="abs" style="left:772px;top:725px;width:258.5px;height:35px;border-radius:5px;background:#efefed"></div>
  <svg width="1222" height="807">
    <path d="M773 727 C800 724.5 850 724.5 900 723.8 C950 723.2 1000 723 1023.5 725 L1023.5 754 C1000 750.5 940 750 900 750.3 C860 750.5 810 751.5 775 754.5 Z" fill="#f4e700"/>
  </svg>
<svg width="1222" height="807" viewBox="0 0 1222 807" fill="none" stroke-linecap="round" stroke-linejoin="round">
  <!-- checks -->
  <g stroke="#4f4f4f" stroke-width="1.2">
    <path d="M788.2 615.8 L791.6 619.2 L798.6 612.2"/>
    <path d="M788.2 743.4 L791.6 746.8 L798.6 739.6" stroke="#222" stroke-width="1.35"/>
    <path d="M788.2 783.4 L791.6 786.8 L798.6 779.8"/>
  </g>
  <!-- navigation pane -->
  <path d="M828.4 607.3 h9.6 a2.9 2.9 0 0 1 2.9 2.9 v8.2 a2.9 2.9 0 0 1 -2.9 2.9 h-9.6" stroke="#5a5a5a" stroke-width="1.25"/>
  <path d="M828.4 607.3 h-4 a2.9 2.9 0 0 0 -2.9 2.9 v8.2 a2.9 2.9 0 0 0 2.9 2.9 h4 z" stroke="#0f6fd1" stroke-width="1.3"/>
  <!-- compact view -->
  <path d="M825.6 649 V656 M822.2 652.8 L825.6 656.2 L829 652.8 M825.6 667.6 V660.6 M822.2 663.8 L825.6 660.4 L829 663.8" stroke="#0f6fd1" stroke-width="1.3"/>
  <path d="M832.6 652.4 H840.8 M832.6 656.3 H840.8 M832.6 660.2 H840.8 M832.6 664.1 H840.8" stroke="#5a5a5a" stroke-width="1.15" stroke-linecap="butt"/>
  <!-- item check boxes -->
  <path d="M828.6 711.2 H824.2 a2.6 2.6 0 0 1 -2.6 -2.6 V696.8 a2.6 2.6 0 0 1 2.6 -2.6 h3.6 l2.4 2.3 h8 a2.6 2.6 0 0 1 2.6 2.6 v1.4" stroke="#5a5a5a" stroke-width="1.2"/>
  <path d="M821.8 698.6 H828.4 L830.4 696.6" stroke="#5a5a5a" stroke-width="1.1"/>
  <rect x="830.6" y="701.6" width="10.8" height="10.6" rx="2.2" fill="#0f6fd1" stroke="none"/>
  <path d="M833.2 706.9 L835.3 709 L839.2 704.8" stroke="#fff" stroke-width="1.3"/>
  <!-- file name extensions -->
  <path d="M824 735.6 a2.4 2.4 0 0 1 2.4 -2.4 h5.8 l5.8 5.8 v9.8 a2.4 2.4 0 0 1 -2.4 2.4 h-9.2 a2.4 2.4 0 0 1 -2.4 -2.4 z M832.2 733.4 v3.4 a2.2 2.2 0 0 0 2.2 2.2 h3.4" stroke="#4a4a2a" stroke-width="1.2"/>
  <path d="M827.8 739.4 V748 M826.2 739.2 H829.4 M826.2 748.2 H829.4" stroke="#1f9d4d" stroke-width="1.2"/>
  <!-- hidden items (eye) -->
  <path d="M821.8 782.4 C823.6 778.6 827 776.6 831.2 776.6 C835.4 776.6 838.8 778.6 840.6 782.4" stroke="#5a5a5a" stroke-width="1.2"/>
  <circle cx="831.2" cy="784.2" r="3.9" stroke="#5a5a5a" stroke-width="1.2"/>
</svg>

<span class="t" style="left:855.90px;top:608px;font-size:17.3px;color:#1a1a1a;transform:scaleX(1.0208);">Navigation pane</span>
<span class="t" style="left:855.40px;top:652px;font-size:17.3px;color:#1a1a1a;letter-spacing:0.088px;">Compact view</span>
<span class="t" style="left:855.90px;top:696px;font-size:17.3px;color:#1a1a1a;letter-spacing:-0.072px;">Item check boxes</span>
<span class="t" style="left:855.90px;top:736px;font-size:17.3px;color:#1a1a1a;letter-spacing:-0.163px;">File name extensions</span>
<span class="t" style="left:855.90px;top:776px;font-size:17.3px;color:#1a1a1a;letter-spacing:0.158px;">Hidden items</span>
</div>

</body>
</html>
